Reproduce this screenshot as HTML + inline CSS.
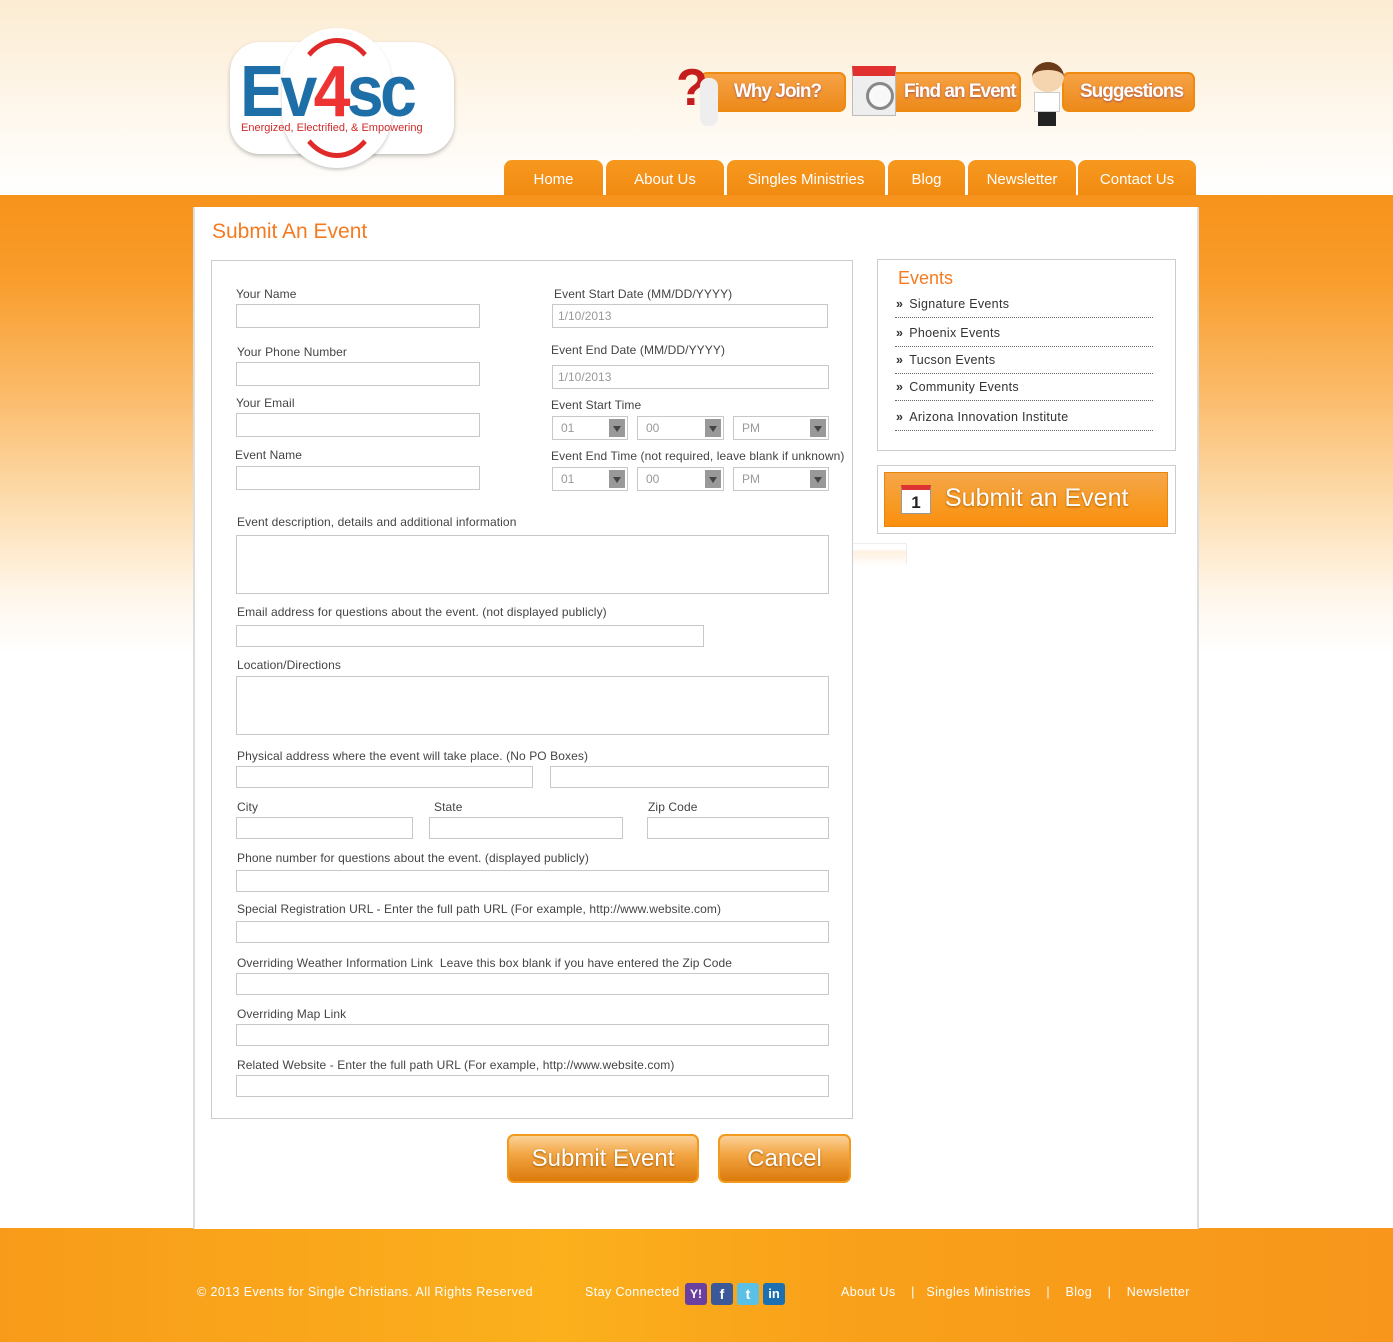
<!DOCTYPE html>
<html><head><meta charset="utf-8">
<style>
*{margin:0;padding:0;box-sizing:border-box}
body{width:1393px;height:1342px;position:relative;overflow:hidden;font-family:"Liberation Sans",Arial,sans-serif;background:#fff}
.hdr{position:absolute;left:0;top:0;width:1393px;height:195px;background:linear-gradient(#fcecd2,#fef7ec 110px,#fff 195px)}
.band{position:absolute;left:0;top:195px;width:1393px;height:460px;background:linear-gradient(#f7931c 0px,#f99c2a 80px,#fbbb6a 200px,#fde0b6 320px,#fff6ea 400px,#fff 460px)}
.main{position:absolute;left:193px;top:207px;width:1006px;height:1022px;background:#fff;border-left:2px solid #ddd;border-right:2px solid #ddd}
.foot{position:absolute;left:0;top:1228px;width:1393px;height:114px;background:linear-gradient(90deg,#f89b1a,#fbb01c 40%,#f9a11a 60%,#f7961b)}
.a{position:absolute}
.l{position:absolute;font-size:12px;color:#444;white-space:nowrap;letter-spacing:.1px}
.i{position:absolute;border:1px solid #c8c8c8;background:#fff;font-size:12px;color:#999;padding:4px 0 0 5px}
.s{position:absolute;border:1px solid #c8c8c8;background:#fff;height:24px;font-size:12px;color:#999;padding:4px 0 0 8px}
.s:after{content:"";position:absolute;right:2px;top:2px;width:16px;height:18px;background:#999}
.s:before{content:"";position:absolute;right:6px;top:9px;border-left:4px solid transparent;border-right:4px solid transparent;border-top:6px solid #444;z-index:2}
.tab{position:absolute;top:160px;height:35px;background:linear-gradient(#f7981e,#f18b12);border-radius:8px 8px 0 0;color:#fff;font-size:15px;text-align:center;line-height:40px}
.pill{position:absolute;top:72px;height:40px;background:linear-gradient(#f6a246,#ed8a1a);border:2px solid #ef8a10;border-radius:7px;color:#fff;font-weight:bold;font-size:19px;letter-spacing:-1px;white-space:nowrap;line-height:36px;text-shadow:0 1px 2px #a55}
.ev{position:absolute;left:896px;font-size:12.5px;color:#333;letter-spacing:.3px}
.ev:before{content:"\00bb";font-weight:bold;margin-right:6px}
.dl{position:absolute;left:895px;width:258px;border-top:1px dotted #666}
.btn{position:absolute;top:1134px;height:49px;border-radius:7px;background:linear-gradient(#fbd198,#f3a644 40%,#dc7a0c);border:2px solid #f29a1d;color:#fff;font-size:24px;text-align:center;line-height:45px;text-shadow:0 1px 2px #a35a00}
.ft{position:absolute;top:1285px;color:#fff;font-size:12.5px;letter-spacing:.4px}
.ic{position:absolute;top:1283px;width:22px;height:22px;border-radius:3px;color:#fff;font-weight:bold;font-size:14px;text-align:center;line-height:22px}
</style></head><body>
<div class="hdr"></div>
<div class="band"></div>
<div class="foot"></div>

<!-- logo -->
<div class="a" style="left:230px;top:42px;width:224px;height:112px;background:#fff;border-radius:30px 40px 30px 30px;box-shadow:0 2px 4px rgba(0,0,0,.25)"></div>
<div class="a" style="left:282px;top:28px;width:110px;height:140px;background:#fff;border-radius:55px;box-shadow:0 2px 3px rgba(0,0,0,.2)"></div>
<div class="a" style="left:292px;top:38px;width:90px;height:120px;border:5px solid #e02a2a;border-radius:50%;border-left-color:transparent;border-right-color:transparent"></div>
<div class="a" style="left:240px;top:52px;font-size:72px;font-weight:bold;letter-spacing:-4px;color:#1e6fa8;line-height:80px;transform:scaleX(.92);transform-origin:left">Ev<span style="color:#e33">4</span>sc</div>
<div class="a" style="left:241px;top:122px;font-size:11px;color:#d02a2a">Energized, Electrified, &amp; Empowering</div>

<!-- top pills -->
<div class="pill" style="left:700px;width:146px;padding-left:32px">Why Join?</div>
<div class="a" style="left:676px;top:58px;font-size:52px;font-weight:bold;color:#c51d1d;line-height:60px">?</div>
<div class="a" style="left:700px;top:78px;width:18px;height:48px;background:#eee;border-radius:8px"></div>
<div class="pill" style="left:880px;width:141px;padding-left:22px">Find an Event</div>
<div class="a" style="left:852px;top:66px;width:44px;height:50px;background:#eee;border:1px solid #bbb;border-top:10px solid #e03030"></div>
<div class="a" style="left:866px;top:82px;width:28px;height:28px;border:3px solid #888;border-radius:50%;background:rgba(255,255,255,.6)"></div>
<div class="pill" style="left:1062px;width:133px;padding-left:16px">Suggestions</div>
<div class="a" style="left:1032px;top:62px;width:32px;height:30px;background:#f5d4b0;border-radius:50%;border-top:8px solid #6b3a1a"></div>
<div class="a" style="left:1034px;top:92px;width:26px;height:20px;background:#fff;border:1px solid #ccc"></div>
<div class="a" style="left:1038px;top:112px;width:18px;height:14px;background:#222"></div>

<!-- nav -->
<div class="tab" style="left:504px;width:99px">Home</div>
<div class="tab" style="left:606px;width:118px">About Us</div>
<div class="tab" style="left:727px;width:158px">Singles Ministries</div>
<div class="tab" style="left:888px;width:77px">Blog</div>
<div class="tab" style="left:968px;width:108px">Newsletter</div>
<div class="tab" style="left:1078px;width:118px">Contact Us</div>

<div class="main"></div>
<div class="a" style="left:212px;top:220px;font-size:21px;color:#f47b20">Submit An Event</div>

<!-- form box -->
<div class="a" style="left:211px;top:260px;width:642px;height:859px;border:1px solid #ccc"></div>

<div class="l" style="left:236px;top:287px">Your Name</div>
<div class="i" style="left:236px;top:304px;width:244px;height:24px"></div>
<div class="l" style="left:237px;top:345px">Your Phone Number</div>
<div class="i" style="left:236px;top:362px;width:244px;height:24px"></div>
<div class="l" style="left:236px;top:396px">Your Email</div>
<div class="i" style="left:236px;top:413px;width:244px;height:24px"></div>
<div class="l" style="left:235px;top:448px">Event Name</div>
<div class="i" style="left:236px;top:466px;width:244px;height:24px"></div>

<div class="l" style="left:554px;top:287px">Event Start Date (MM/DD/YYYY)</div>
<div class="i" style="left:552px;top:304px;width:276px;height:24px">1/10/2013</div>
<div class="l" style="left:551px;top:343px">Event End Date (MM/DD/YYYY)</div>
<div class="i" style="left:552px;top:365px;width:277px;height:24px">1/10/2013</div>
<div class="l" style="left:551px;top:398px">Event Start Time</div>
<div class="s" style="left:552px;top:416px;width:76px">01</div>
<div class="s" style="left:637px;top:416px;width:87px">00</div>
<div class="s" style="left:733px;top:416px;width:96px">PM</div>
<div class="l" style="left:551px;top:449px">Event End Time (not required, leave blank if unknown)</div>
<div class="s" style="left:552px;top:467px;width:76px">01</div>
<div class="s" style="left:637px;top:467px;width:87px">00</div>
<div class="s" style="left:733px;top:467px;width:96px">PM</div>

<div class="l" style="left:237px;top:515px">Event description, details and additional information</div>
<div class="i" style="left:236px;top:535px;width:593px;height:59px"></div>
<div class="l" style="left:237px;top:605px">Email address for questions about the event. (not displayed publicly)</div>
<div class="i" style="left:236px;top:625px;width:468px;height:22px"></div>
<div class="l" style="left:237px;top:658px">Location/Directions</div>
<div class="i" style="left:236px;top:676px;width:593px;height:59px"></div>
<div class="l" style="left:237px;top:749px">Physical address where the event will take place. (No PO Boxes)</div>
<div class="i" style="left:236px;top:766px;width:297px;height:22px"></div>
<div class="i" style="left:550px;top:766px;width:279px;height:22px"></div>
<div class="l" style="left:237px;top:800px">City</div>
<div class="l" style="left:434px;top:800px">State</div>
<div class="l" style="left:648px;top:800px">Zip Code</div>
<div class="i" style="left:236px;top:817px;width:177px;height:22px"></div>
<div class="i" style="left:429px;top:817px;width:194px;height:22px"></div>
<div class="i" style="left:647px;top:817px;width:182px;height:22px"></div>
<div class="l" style="left:237px;top:851px">Phone number for questions about the event. (displayed publicly)</div>
<div class="i" style="left:236px;top:870px;width:593px;height:22px"></div>
<div class="l" style="left:237px;top:902px">Special Registration URL - Enter the full path URL (For example, http://www.website.com)</div>
<div class="i" style="left:236px;top:921px;width:593px;height:22px"></div>
<div class="l" style="left:237px;top:956px">Overriding Weather Information Link&nbsp; Leave this box blank if you have entered the Zip Code</div>
<div class="i" style="left:236px;top:973px;width:593px;height:22px"></div>
<div class="l" style="left:237px;top:1007px">Overriding Map Link</div>
<div class="i" style="left:236px;top:1024px;width:593px;height:22px"></div>
<div class="l" style="left:237px;top:1058px">Related Website - Enter the full path URL (For example, http://www.website.com)</div>
<div class="i" style="left:236px;top:1075px;width:593px;height:22px"></div>

<div class="btn" style="left:507px;width:192px">Submit Event</div>
<div class="btn" style="left:718px;width:133px">Cancel</div>

<!-- sidebar -->
<div class="a" style="left:877px;top:259px;width:299px;height:192px;border:1px solid #ccc"></div>
<div class="a" style="left:898px;top:268px;font-size:18px;color:#f47b20">Events</div>
<div class="ev" style="top:297px">Signature Events</div><div class="dl" style="top:317px"></div>
<div class="ev" style="top:326px">Phoenix Events</div><div class="dl" style="top:346px"></div>
<div class="ev" style="top:353px">Tucson Events</div><div class="dl" style="top:373px"></div>
<div class="ev" style="top:380px">Community Events</div><div class="dl" style="top:400px"></div>
<div class="ev" style="top:410px">Arizona Innovation Institute</div><div class="dl" style="top:430px"></div>

<div class="a" style="left:877px;top:465px;width:299px;height:69px;border:1px solid #ccc"></div>
<div class="a" style="left:884px;top:472px;width:284px;height:55px;background:linear-gradient(#f5a64a,#f79a22 60%,#fb8f10);border:1px solid #e8860c"></div>
<div class="a" style="left:901px;top:485px;width:30px;height:29px;background:#fff;border:1px solid #999;border-top:5px solid #d33;font-size:17px;font-weight:bold;text-align:center;line-height:26px;color:#222">1</div>
<div class="a" style="left:945px;top:484px;font-size:25px;color:#fff;text-shadow:0 1px 2px #b35f00">Submit an Event</div>
<div class="a" style="left:853px;top:543px;width:54px;height:22px;border-top:1px solid #eee;border-right:1px solid #eee;background:linear-gradient(#fff,#fff 5px,#fef0e0 8px,#fff 22px)"></div>

<!-- footer -->
<div class="ft" style="left:197px">© 2013 Events for Single Christians. All Rights Reserved</div>
<div class="ft" style="left:585px">Stay Connected</div>
<div class="ic" style="left:685px;background:#6b3fa0;font-size:12px">Y!</div>
<div class="ic" style="left:711px;background:#3b5998">f</div>
<div class="ic" style="left:737px;background:#5bc0e6">t</div>
<div class="ic" style="left:763px;background:#1c6fb0;font-size:13px">in</div>
<div class="ft" style="left:841px;white-space:pre">About Us    |   Singles Ministries    |    Blog    |    Newsletter</div>
</body></html>
